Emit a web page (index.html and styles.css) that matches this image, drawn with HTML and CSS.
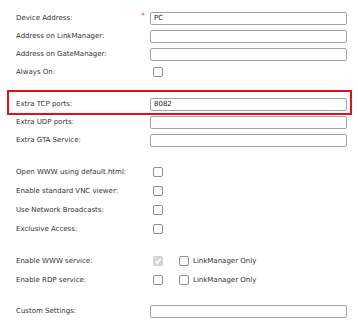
FILE: index.html
```html
<!DOCTYPE html>
<html>
<head>
<title>Device settings</title>
<link rel="stylesheet" href="styles.css">
</head>
<body>
<form class="settings">

<div class="group first">
<div class="row"><label class="lbl">Device Address:<span class="req">*</span></label><input class="txt" type="text" value="PC"></div>
<div class="row"><label class="lbl">Address on LinkManager:</label><input class="txt" type="text"></div>
<div class="row"><label class="lbl">Address on GateManager:</label><input class="txt" type="text"></div>
<div class="row"><label class="lbl">Always On:</label><span class="cell"><input class="chk" type="checkbox"></span></div>
</div>

<div class="highlight">
<div class="row"><label class="lbl">Extra TCP ports:</label><input class="txt" type="text" value="8082"></div>
</div>
<div class="row"><label class="lbl">Extra UDP ports:</label><input class="txt" type="text"></div>
<div class="row"><label class="lbl">Extra GTA Service:</label><input class="txt" type="text"></div>

<div class="group">
<div class="row tall"><label class="lbl">Open WWW using default.html:</label><span class="cell"><input class="chk" type="checkbox"></span></div>
<div class="row tall"><label class="lbl">Enable standard VNC viewer:</label><span class="cell"><input class="chk" type="checkbox"></span></div>
<div class="row tall"><label class="lbl">Use Network Broadcasts:</label><span class="cell"><input class="chk" type="checkbox"></span></div>
<div class="row tall"><label class="lbl">Exclusive Access:</label><span class="cell"><input class="chk" type="checkbox"></span></div>
</div>

<div class="group">
<div class="row tall"><label class="lbl">Enable WWW service:</label>
<span class="cell">
<span class="chk off"><svg width="8" height="8" viewBox="0 0 8 8"><path d="M1.5 4.2 L3.3 6 L6.6 1.8" fill="none" stroke="#fff" stroke-width="1.3"/></svg></span>
<label class="opt"><input class="chk" type="checkbox">LinkManager Only</label>
</span></div>
<div class="row tall"><label class="lbl">Enable RDP service:</label>
<span class="cell">
<input class="chk" type="checkbox">
<label class="opt"><input class="chk" type="checkbox">LinkManager Only</label>
</span></div>
</div>

<div class="group">
<div class="row"><label class="lbl">Custom Settings:</label><input class="txt" type="text"></div>
</div>

</form>
</body>
</html>
```

FILE: styles.css
```css
/* Device settings form */

body
{ margin: 0;
background: #fff;
font-family: "DejaVu Sans", Verdana, sans-serif;
font-size: 7px;
color: #333;
}

form.settings
{ padding: 9px 11px 0 16px;
}

div.group
{ margin-top: 13px;
}

div.group.first
{ margin-top: 0;
}

div.row
{ display: grid;
grid-template-columns: 134px 1fr;
align-items: center;
height: 18px;
}

div.row.tall
{ height: 19px;
}

label.lbl
{ display: flex;
justify-content: space-between;
align-items: center;
padding-right: 5px;
white-space: nowrap;
}

span.req
{ color: #e8554e;
font-size: 8px;
margin-top: -3px;
}

input.txt
{ box-sizing: border-box;
width: 100%;
height: 13px;
margin: 0;
padding: 0 3px;
border: 1px solid #a3a3a3;
border-radius: 2px;
font-family: "DejaVu Sans", Verdana, sans-serif;
font-size: 7px;
color: #222;
background: #fff;
}

span.cell
{ display: flex;
align-items: center;
padding-left: 3px;
}

.chk
{ -webkit-appearance: none;
appearance: none;
box-sizing: border-box;
width: 10px;
height: 10px;
margin: 0;
border: 1px solid #8d8d8d;
border-radius: 2px;
background: #fff;
display: inline-flex;
align-items: center;
justify-content: center;
}

span.chk.off
{ border-color: #d3d3d3;
background: #d6d6d6;
}

label.opt
{ display: flex;
align-items: center;
gap: 4px;
margin-left: 16px;
}

/* red highlight around the TCP row */
div.highlight
{ margin: 9px -5px -2px -9px;
padding: 3px 3px 0 7px;
border: 2px solid #e3101c;
}
```
